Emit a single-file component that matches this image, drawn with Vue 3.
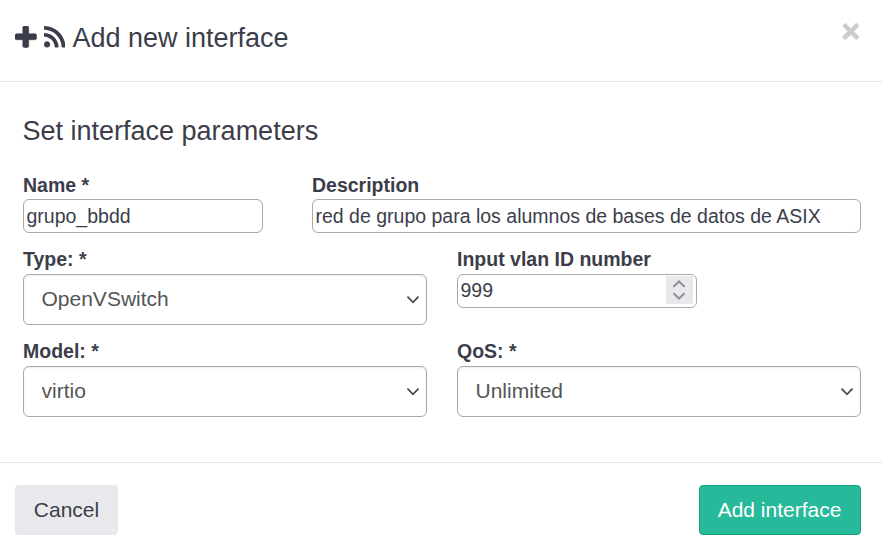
<script setup>
import { ref } from 'vue'

const name = ref('grupo_bbdd')
const description = ref('red de grupo para los alumnos de bases de datos de ASIX')
const type = ref('OpenVSwitch')
const vlan = ref('999')
const model = ref('virtio')
const qos = ref('Unlimited')
</script>

<template>
  <form class="modal" @submit.prevent>
    <header class="modal-header">
      <h4 class="title">
        <svg class="icon icon-plus" viewBox="192 128 1408 1408"><path d="M1600 736v192q0 40-28 68t-68 28h-416v416q0 40-28 68t-68 28h-192q-40 0-68-28t-28-68v-416h-416q-40 0-68-28t-28-68v-192q0-40 28-68t68-28h416v-416q0-40 28-68t68-28h192q40 0 68 28t28 68v416h416q40 0 68 28t28 68z" /></svg>
        <svg class="icon" viewBox="0 32 448 448"><path d="M128.081 415.959c0 35.369-28.672 64.041-64.041 64.041S0 451.328 0 415.959s28.672-64.041 64.041-64.041 64.040 28.673 64.040 64.041zm175.660 47.250c-8.354-154.600-132.185-278.587-286.950-286.950C7.656 175.765 0 183.105 0 192.253v48.069c0 8.415 6.490 15.472 14.887 16.018 111.832 7.284 201.473 96.702 208.772 208.772.547 8.397 7.604 14.887 16.018 14.887h48.069c9.149.001 16.489-7.655 15.995-16.790zm144.249.288C439.596 229.677 251.465 40.445 16.503 32.010 7.473 31.686 0 38.981 0 48.016v48.068c0 8.625 6.835 15.645 15.453 15.999 191.179 7.839 344.627 161.316 352.465 352.465.353 8.618 7.373 15.453 15.999 15.453h48.068c9.034-.001 16.329-7.474 16.005-16.504z" /></svg>
        <span>Add new interface</span>
      </h4>
      <button class="close" type="button">×</button>
    </header>

    <main class="modal-body">
      <h4 class="section-title">Set interface parameters</h4>
      <div class="row row-names">
        <label class="field">
          <span class="label">Name *</span>
          <input v-model="name" class="input" type="text" />
        </label>
        <label class="field">
          <span class="label">Description</span>
          <input v-model="description" class="input" type="text" />
        </label>
      </div>
      <div class="row row-type">
        <label class="field">
          <span class="label">Type: *</span>
          <span class="select-box">
            <select v-model="type" class="select"><option>OpenVSwitch</option></select>
            <svg class="chevron" viewBox="0 0 12 8"><path d="M1 1.200 6 6.300 11 1.200" /></svg>
          </span>
        </label>
        <label class="field">
          <span class="label">Input vlan ID number</span>
          <span class="number">
            <input v-model="vlan" class="number-input" type="text" inputmode="numeric" />
            <span class="spinner">
              <svg viewBox="0 0 12 8"><path d="M1 6.300 6 1.500 11 6.300" /></svg>
              <svg viewBox="0 0 12 8"><path d="M1 1.700 6 6.500 11 1.700" /></svg>
            </span>
          </span>
        </label>
      </div>
      <div class="row">
        <label class="field">
          <span class="label">Model: *</span>
          <span class="select-box">
            <select v-model="model" class="select"><option>virtio</option></select>
            <svg class="chevron" viewBox="0 0 12 8"><path d="M1 1.200 6 6.300 11 1.200" /></svg>
          </span>
        </label>
        <label class="field">
          <span class="label">QoS: *</span>
          <span class="select-box">
            <select v-model="qos" class="select"><option>Unlimited</option></select>
            <svg class="chevron" viewBox="0 0 12 8"><path d="M1 1.200 6 6.300 11 1.200" /></svg>
          </span>
        </label>
      </div>
    </main>

    <footer class="modal-footer">
      <button class="btn btn-default" type="button">Cancel</button>
      <button class="btn btn-success" type="submit">Add interface</button>
    </footer>
  </form>
</template>

<style>
body {
  margin: 0;
  background: #fff;
}
</style>

<style scoped>
.modal,
.modal * {
  box-sizing: border-box;
  font-family: "Liberation Sans", Arial, sans-serif;
}
.modal {
  display: flex;
  flex-direction: column;
  height: 558px;
  background: #fff;
  color: #3b3e4a;
  font-size: 19.5px;
}
.modal-header {
  display: flex;
  justify-content: space-between;
  align-items: flex-start;
  height: 82px;
  padding: 15px 22px 0 15px;
  border-bottom: 1px solid #e5e5e5;
}
.title {
  display: flex;
  align-items: center;
  gap: 7px;
  margin: 3px 0 0;
  font-size: 27px;
  font-weight: 400;
  line-height: 38px;
}
.title span {
  padding: 1px 0 0 0.5px;
}
.icon {
  width: 21.5px;
  height: 21.5px;
  margin-top: -1px;
  fill: currentColor;
}
.icon-plus {
  stroke: currentColor;
  stroke-width: 40;
}
.close {
  padding: 1px 0 0;
  border: 0;
  background: none;
  color: #ccc;
  font-size: 31.5px;
  font-weight: 700;
  line-height: 31px;
  -webkit-text-stroke: 1px #ccc;
}
.modal-body {
  flex: 1;
  padding: 30px 21px 0 23px;
}
.section-title {
  margin: 0 0 21px -0.5px;
  font-size: 27px;
  font-weight: 400;
  line-height: 38px;
}
.row {
  display: grid;
  grid-template-columns: 404px 404px;
  justify-content: space-between;
  align-items: start;
}
.row-names {
  grid-template-columns: 240px 549px;
  margin-bottom: 12px;
}
.row-type {
  margin-bottom: 12px;
}
.field {
  display: flex;
  flex-direction: column;
}
.label {
  height: 28px;
  font-weight: 700;
  line-height: 28px;
}
.row:not(.row-names) .label {
  height: 29px;
}
.input,
.number {
  width: 100%;
  height: 34px;
  border: 1px solid #a9a9ab;
  border-radius: 6px;
  background: #fff;
}
.input {
  padding: 0 2.500px;
  color: inherit;
  font-size: 19.5px;
}
.number {
  display: flex;
  width: 240px;
  padding: 1px 3px 3px 2.500px;
}
.number-input {
  flex: 1;
  min-width: 0;
  padding: 0;
  border: 0;
  background: none;
  color: inherit;
  font-size: 19.5px;
}
.spinner {
  display: flex;
  flex-direction: column;
  align-items: center;
  justify-content: center;
  gap: 4px;
  width: 27px;
  height: 28px;
  padding-right: 1px;
  background: #e9e9ed;
}
.spinner svg,
.chevron {
  width: 12px;
  height: 8px;
  fill: none;
  stroke: #8f8f9d;
  stroke-width: 2;
  stroke-linecap: round;
}
.select-box {
  display: grid;
  align-items: center;
  height: 51px;
}
.select {
  grid-area: 1 / 1;
  appearance: none;
  width: 100%;
  height: 51px;
  padding: 0 17.500px 2px;
  border: 1px solid #a9a9ab;
  border-radius: 6px;
  background: #fff;
  box-shadow: inset 0 1px 2px rgba(0, 0, 0, 0.075);
  color: #555;
  font-size: 21px;
}
.chevron {
  grid-area: 1 / 1;
  justify-self: end;
  margin-right: 8.500px;
  stroke: #4a4a4a;
  stroke-width: 1.8;
  pointer-events: none;
}
.modal-footer {
  display: flex;
  justify-content: space-between;
  height: 96px;
  padding: 22px 21px 0 15px;
  border-top: 1px solid #e5e5e5;
}
.btn {
  height: 50px;
  padding: 0;
  border: 0;
  border-radius: 4px;
  font-size: 21px;
}
.btn-default {
  width: 103px;
  background: #e9e9ed;
  color: #3b3e4a;
}
.btn-success {
  width: 162px;
  padding-right: 1px;
  border: 1px solid #169f85;
  background: #26b99a;
  color: #fff;
}
</style>
